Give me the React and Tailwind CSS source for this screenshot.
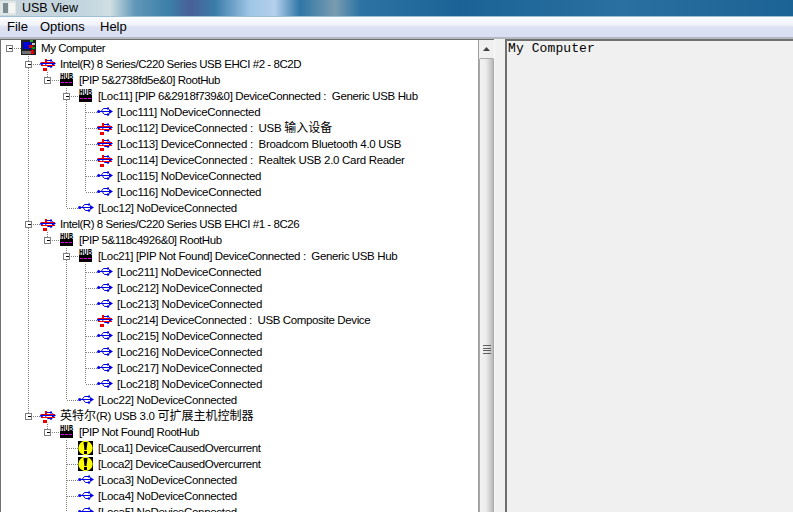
const tree = [
  { level: 0, kind: "computer", text: "My Computer", box: true },
  { level: 1, kind: "usbRed", text: "Intel(R) 8 Series/C220 Series USB EHCI #2 - 8C2D", box: true, next: true },
  { level: 2, kind: "hub", text: "[PIP 5&2738fd5e&0] RootHub", box: true, guides: [1] },
  { level: 3, kind: "hub", text: "[Loc11] [PIP 6&2918f739&0] DeviceConnected :  Generic USB Hub", box: true, next: true, guides: [1] },
  { level: 4, kind: "usb", text: "[Loc111] NoDeviceConnected", next: true, guides: [1, 3] },
  { level: 4, kind: "usbRed", text: "[Loc112] DeviceConnected :  USB 输入设备", next: true, guides: [1, 3] },
  { level: 4, kind: "usbRed", text: "[Loc113] DeviceConnected :  Broadcom Bluetooth 4.0 USB", next: true, guides: [1, 3] },
  { level: 4, kind: "usbRed", text: "[Loc114] DeviceConnected :  Realtek USB 2.0 Card Reader", next: true, guides: [1, 3] },
  { level: 4, kind: "usb", text: "[Loc115] NoDeviceConnected", next: true, guides: [1, 3] },
  { level: 4, kind: "usb", text: "[Loc116] NoDeviceConnected", guides: [1, 3] },
  { level: 3, kind: "usb", text: "[Loc12] NoDeviceConnected", guides: [1] },
  { level: 1, kind: "usbRed", text: "Intel(R) 8 Series/C220 Series USB EHCI #1 - 8C26", box: true, next: true },
  { level: 2, kind: "hub", text: "[PIP 5&118c4926&0] RootHub", box: true, guides: [1] },
  { level: 3, kind: "hub", text: "[Loc21] [PIP Not Found] DeviceConnected :  Generic USB Hub", box: true, next: true, guides: [1] },
  { level: 4, kind: "usb", text: "[Loc211] NoDeviceConnected", next: true, guides: [1, 3] },
  { level: 4, kind: "usb", text: "[Loc212] NoDeviceConnected", next: true, guides: [1, 3] },
  { level: 4, kind: "usb", text: "[Loc213] NoDeviceConnected", next: true, guides: [1, 3] },
  { level: 4, kind: "usbRed", text: "[Loc214] DeviceConnected :  USB Composite Device", next: true, guides: [1, 3] },
  { level: 4, kind: "usb", text: "[Loc215] NoDeviceConnected", next: true, guides: [1, 3] },
  { level: 4, kind: "usb", text: "[Loc216] NoDeviceConnected", next: true, guides: [1, 3] },
  { level: 4, kind: "usb", text: "[Loc217] NoDeviceConnected", next: true, guides: [1, 3] },
  { level: 4, kind: "usb", text: "[Loc218] NoDeviceConnected", guides: [1, 3] },
  { level: 3, kind: "usb", text: "[Loc22] NoDeviceConnected", guides: [1] },
  { level: 1, kind: "usbRed", text: "英特尔(R) USB 3.0 可扩展主机控制器", box: true },
  { level: 2, kind: "hub", text: "[PIP Not Found] RootHub", box: true },
  { level: 3, kind: "warn", text: "[Loca1] DeviceCausedOvercurrent", next: true },
  { level: 3, kind: "warn", text: "[Loca2] DeviceCausedOvercurrent", next: true },
  { level: 3, kind: "usb", text: "[Loca3] NoDeviceConnected", next: true },
  { level: 3, kind: "usb", text: "[Loca4] NoDeviceConnected", next: true },
  { level: 3, kind: "usb", text: "[Loca5] NoDeviceConnected", next: true },
];

function UsbGlyph() {
  return (
    <g>
      <path d="M2 7.5H13M4 7.5L6.5 4.5H10M5 7.5L7.5 10.5H10" stroke="#0000e8" strokeWidth="1" fill="none" />
      <circle cx="1.7" cy="7.5" r="1.6" fill="#0000e8" />
      <path d="M12 5L16 7.5L12 10z" fill="#0000e8" />
      <rect x="10" y="3.5" width="2" height="2" fill="#0000e8" />
      <circle cx="11" cy="10.5" r="1.3" fill="#0000e8" />
    </g>
  );
}

function Icon({ kind }) {
  if (kind === "computer") {
    return (
      <svg width="16" height="16" viewBox="0 0 16 16" className="shrink-0">
        <rect x="0" y="0" width="15" height="15" fill="#202020" />
        <rect x="2" y="2" width="8" height="7" fill="#0000d8" />
        <rect x="9" y="0" width="3" height="2" fill="#30a030" />
        <rect x="11" y="3" width="3" height="2" fill="#c8c8c8" />
        <rect x="8" y="5" width="4" height="3" fill="#e00000" />
        <rect x="11" y="7" width="3" height="2" fill="#00a000" />
        <rect x="1" y="11" width="9" height="3" fill="#707070" />
        <rect x="10" y="10" width="3" height="4" fill="#e00000" />
      </svg>
    );
  }
  if (kind === "hub") {
    return (
      <svg width="16" height="16" viewBox="0 0 16 16" className="shrink-0">
        <text x="7.5" y="6.5" textAnchor="middle" fontFamily="'Liberation Mono', monospace" fontWeight="700" fontSize="9" textLength="13" lengthAdjust="spacingAndGlyphs" fill="#000">HUB</text>
        <rect x="1" y="7" width="13" height="7" fill="#000" />
        <rect x="2" y="10" width="3" height="1" fill="#e000e0" />
        <rect x="6" y="10" width="3" height="1" fill="#e000e0" />
        <rect x="10" y="10" width="3" height="1" fill="#e000e0" />
      </svg>
    );
  }
  if (kind === "warn") {
    return (
      <svg width="16" height="16" viewBox="0 0 16 16" className="shrink-0">
        <rect x="0" y="1" width="15" height="14" fill="#000" />
        <circle cx="7.5" cy="8" r="7.2" fill="#ffff00" />
        <path d="M5.5 2H9.5L8.5 10H6.5z" fill="#000" />
        <rect x="6" y="11" width="3" height="3" fill="#000" />
      </svg>
    );
  }
  return (
    <svg width="16" height="16" viewBox="0 0 16 16" className="shrink-0">
      <UsbGlyph />
      {kind === "usbRed" && (
        <g fill="#f00000">
          <rect x="1" y="6" width="14" height="1" />
          <rect x="1" y="9" width="14" height="1" />
          <rect x="5" y="3" width="2" height="3" />
          <rect x="3" y="12" width="4" height="3" />
        </g>
      )}
    </svg>
  );
}

function Guides({ level, box, next, guides = [] }) {
  const width = 20 + 19 * level;
  const x = 8.5 + 19 * level;
  return (
    <svg width={width} height="16" viewBox={`0 0 ${width} 16`} className="shrink-0">
      <g stroke="#808080" strokeDasharray="1 1" shapeRendering="crispEdges">
        {guides.map((g) => (
          <line key={g} x1={8.5 + 19 * g} y1="0" x2={8.5 + 19 * g} y2="16" />
        ))}
        {level > 0 && <line x1={x} y1="0" x2={x} y2={next ? 16 : 8} />}
        <line x1={x} y1="8.5" x2={width} y2="8.5" />
      </g>
      {box && (
        <g shapeRendering="crispEdges">
          <rect x={x - 3} y="5.5" width="6" height="6" fill="#fff" stroke="#808080" />
          <line x1={x - 1} y1="8.5" x2={x + 2} y2="8.5" stroke="#000" />
        </g>
      )}
    </svg>
  );
}

function rowTracking(text) {
  if (/Series|RootHub|Overcurrent|My Computer/.test(text)) return "tracking-[-0.45px]";
  if (/Generic|Composite/.test(text)) return "tracking-[-0.37px]";
  return "tracking-[-0.3px]";
}

function TreeRow({ row }) {
  const parts = row.text.split(/([\u4e00-\u9fff]+)/);
  return (
    <div className="flex h-4 shrink-0 items-center">
      <Guides level={row.level} box={row.box} next={row.next} guides={row.guides} />
      <Icon kind={row.kind} />
      <span className={`ml-[4px] whitespace-pre font-['Liberation_Sans','Noto_Sans_CJK_SC',sans-serif] text-[11.5px] leading-4 text-black ${rowTracking(row.text)}`}>
        {parts.map((part, i) =>
          i % 2 === 1 ? (
            <span key={i} className="text-[12px] tracking-normal">{part}</span>
          ) : (
            part
          )
        )}
      </span>
    </div>
  );
}

function ScrollBar() {
  return (
    <div className="flex h-full w-[16px] shrink-0 flex-col border-l border-[#a0a0a0] bg-[#f0f0f0]">
      <div className="flex h-[18px] shrink-0 items-center justify-center">
        <svg width="7" height="4" viewBox="0 0 7 4"><path d="M3.5 0L7 4H0z" fill="#404040" /></svg>
      </div>
      <div className="flex flex-1 flex-col items-center rounded-t-[2px] border border-b-0 border-[#a8a8a8] bg-[linear-gradient(90deg,#f2f2f2,#ececec_45%,#c8c8c8_85%,#b8b8b8)] pt-[286px]">
        <div className="flex h-[9px] w-[8px] flex-col justify-between">
          <div className="h-px bg-[#606060]" />
          <div className="h-px bg-[#606060]" />
          <div className="h-px bg-[#606060]" />
          <div className="h-px bg-[#606060]" />
        </div>
      </div>
    </div>
  );
}

export default function App() {
  return (
    <div className="flex h-[512px] w-[793px] flex-col overflow-hidden bg-[#f0f0f0] font-['Liberation_Sans',sans-serif]">
      <div className="flex h-[17px] shrink-0 items-center border-b border-[#9fc0d4] bg-[linear-gradient(90deg,#c9d6dc_0px,#c4d4dc_60px,#c2d6e0_85px,#d0dfe2_110px,#5f97b8_135px,#3b7ea8_170px,#4a5f98_190px,#3a7ca8_215px,#a0c6e6_250px,#b4d0ec_275px,#2f76a6_300px,#7a9cb0_335px,#2d74a4_360px,#1b6396_460px,#2a70a0_620px,#1c6395_793px)]">
        <div className="mr-[6px] flex h-[14px] w-[16px] items-center gap-px bg-[#dfe6e6] pl-[3px]">
          <div className="h-[10px] w-[5px] bg-[#7a8c90]" />
          <div className="h-[10px] w-[6px] bg-[#f4f6f4]" />
        </div>
        <span className="text-[12.5px] leading-none text-black">USB View</span>
      </div>
      <div className="flex h-[20px] shrink-0 items-center bg-[linear-gradient(180deg,#fbfcfe,#f0f3fa_40%,#dce1f3_50%,#d9dff1)] pl-[7px] text-[13px] text-black">
        <span className="w-[33px]">File</span>
        <span className="w-[60px]">Options</span>
        <span>Help</span>
      </div>
      <div className="flex min-h-0 flex-1 border-t-2 border-[#b4b8c0]">
        <div className="flex w-[494px] shrink-0 border-t border-l border-[#707070] bg-white">
          <div className="flex min-w-0 flex-1 flex-col overflow-hidden">
            {tree.map((row, i) => (
              <TreeRow key={i} row={row} />
            ))}
          </div>
          <ScrollBar />
        </div>
        <div className="w-[11px] shrink-0 border-l border-[#f8f8f8] bg-[#f0f0f0]" />
        <div className="min-w-0 flex-1 border-t-2 border-l-2 border-[#707070] bg-[#f0f0f0] pl-[1px] font-['Liberation_Mono',monospace] text-[13px] leading-[15px] tracking-[0.1px] text-black">
          My Computer
        </div>
      </div>
    </div>
  );
}
